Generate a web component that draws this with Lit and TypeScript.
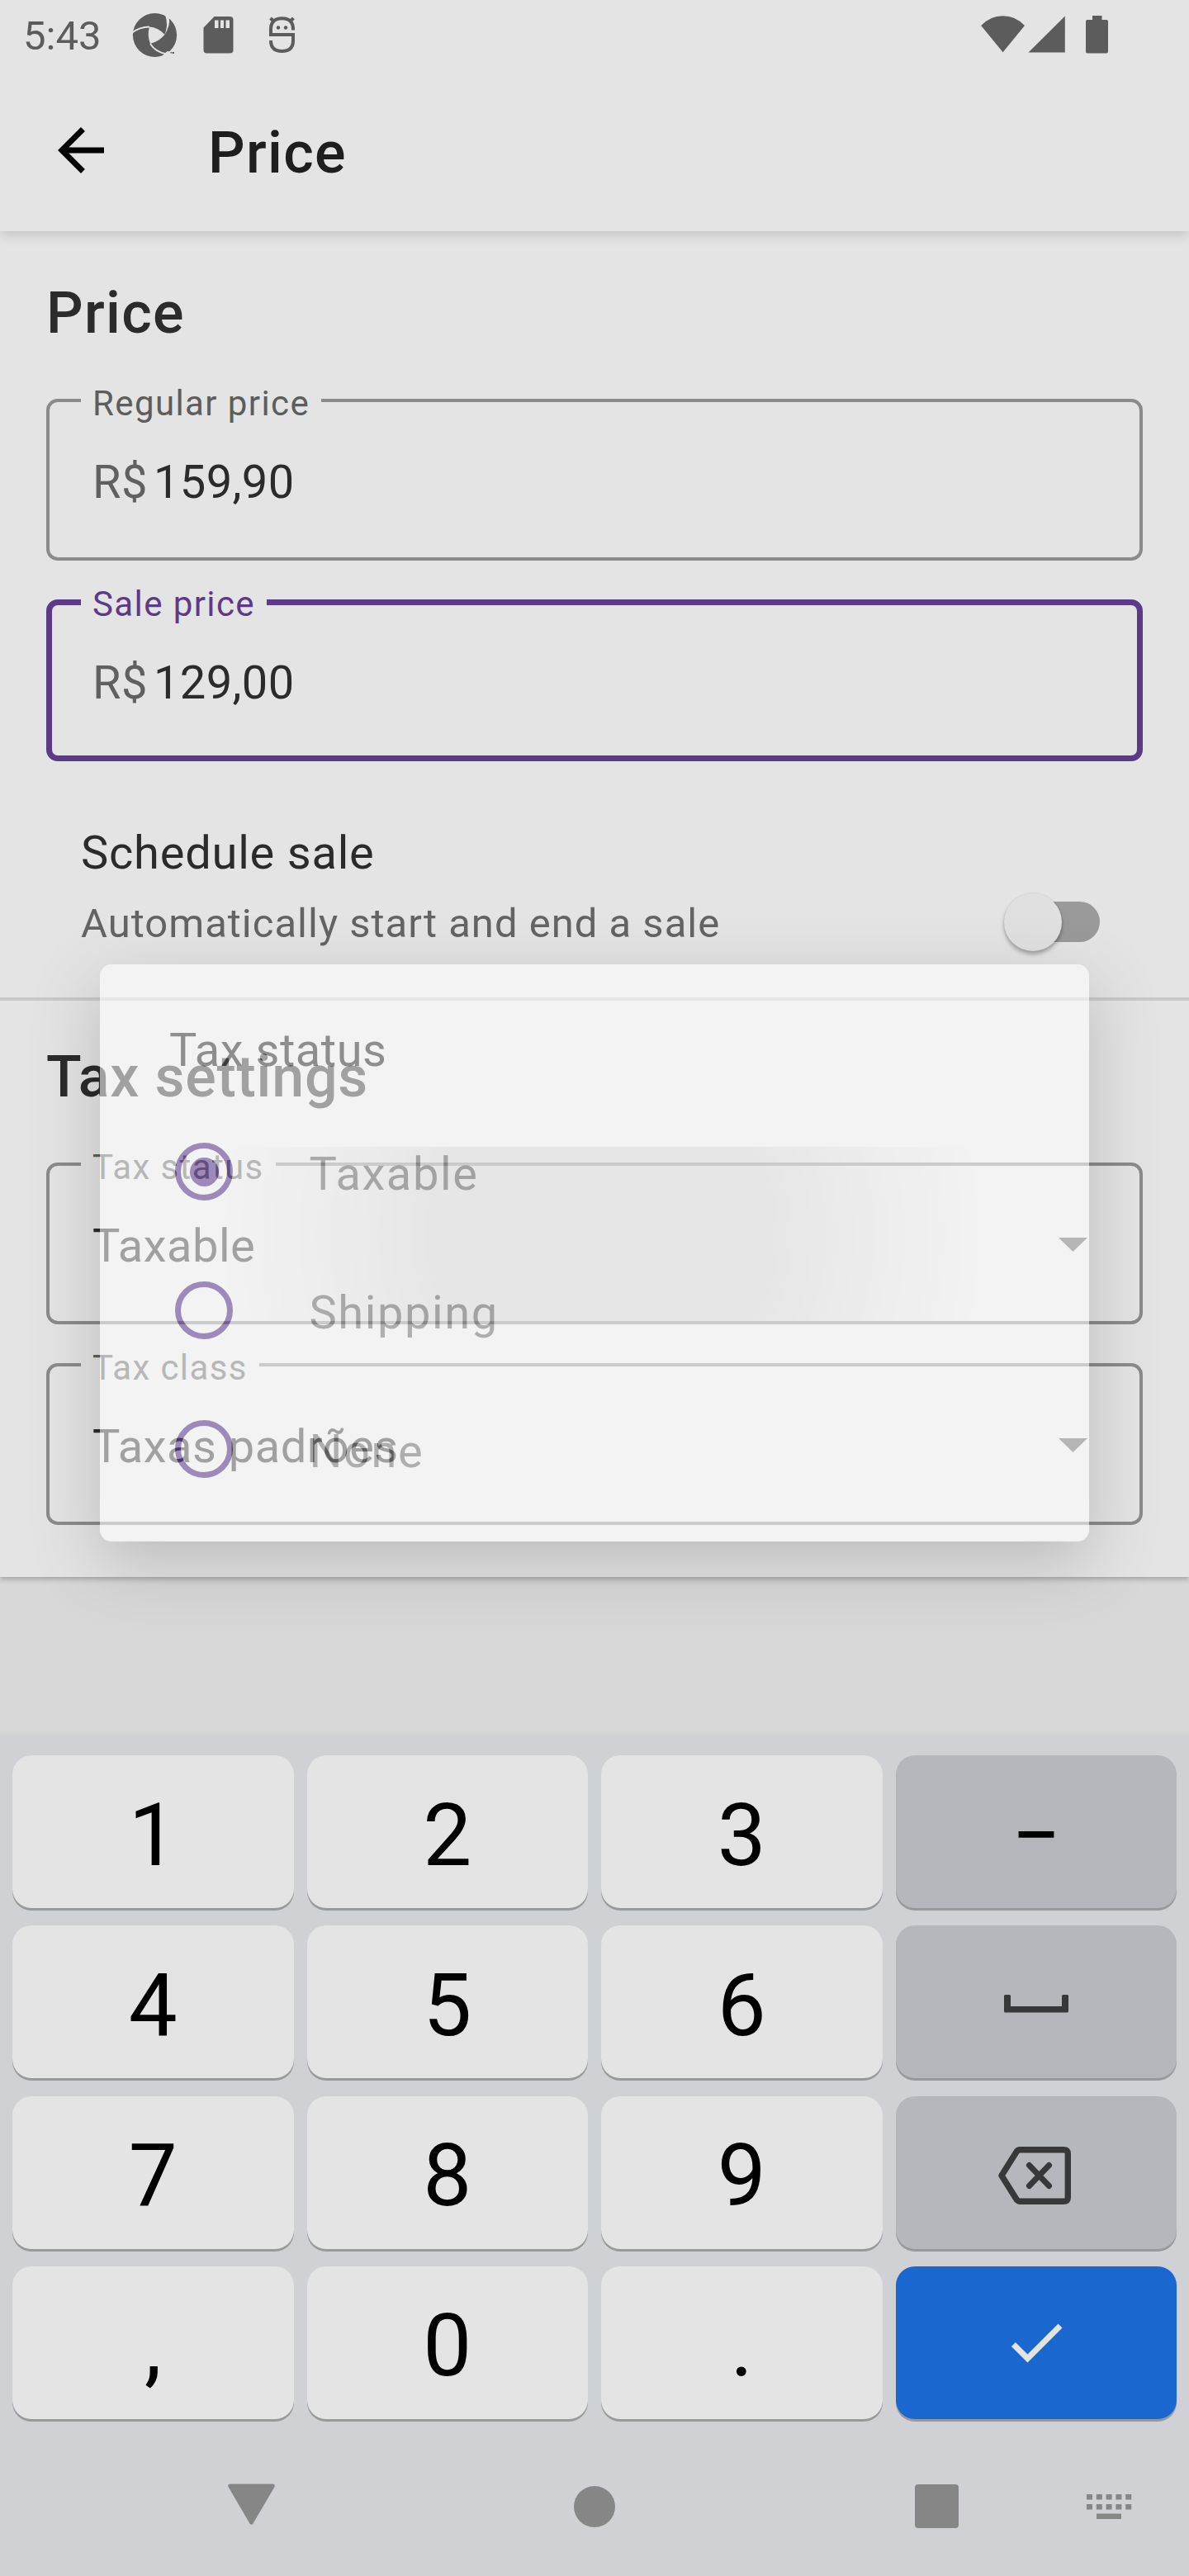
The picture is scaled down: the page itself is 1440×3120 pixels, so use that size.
import { LitElement, html, svg, css, nothing } from "lit";
import { customElement } from "lit/decorators.js";
import { classMap } from "lit/directives/class-map.js";

interface Field {
  label: string;
  value: string;
  prefix?: string;
  focused?: boolean;
  menu?: boolean;
  pressed?: boolean;
}

interface Key {
  id: string;
  kind: "digit" | "action" | "enter";
}

const PRICE_FIELDS: Field[] = [
  { label: "Regular price", prefix: "R$", value: "159,90" },
  { label: "Sale price", prefix: "R$", value: "129,00", focused: true },
];

const TAX_FIELDS: Field[] = [
  { label: "Tax status", value: "Taxable", menu: true, pressed: true },
  { label: "Tax class", value: "Taxas padrões", menu: true },
];

const OPTIONS = ["Taxable", "Shipping", "None"];

const KEYS: Key[] = [
  { id: "1", kind: "digit" },
  { id: "2", kind: "digit" },
  { id: "3", kind: "digit" },
  { id: "−", kind: "action" },
  { id: "4", kind: "digit" },
  { id: "5", kind: "digit" },
  { id: "6", kind: "digit" },
  { id: "space", kind: "action" },
  { id: "7", kind: "digit" },
  { id: "8", kind: "digit" },
  { id: "9", kind: "digit" },
  { id: "backspace", kind: "action" },
  { id: ",", kind: "digit" },
  { id: "0", kind: "digit" },
  { id: ".", kind: "digit" },
  { id: "done", kind: "enter" },
];

const spaceIcon = html`<svg class="space-icon" width="78" height="22" viewBox="0 0 78 22">
  <path fill="#38383a" d="M1.500 0h5Q8 0 8 1.500V14h62V1.500Q70 0 71.500 0h5Q78 0 78 1.500v18.500Q78 21.500 76.500 21.500h-75Q0 21.500 0 20V1.500Q0 0 1.500 0z" />
</svg>`;

const backspaceIcon = html`<svg class="backspace-icon" width="90" height="72" viewBox="0 0 90 72">
  <path fill="none" stroke="#38383a" stroke-width="7.400" stroke-linejoin="round" d="M27.500 4.700H80Q85.300 4.700 85.300 9.500V62.500Q85.300 67.300 80 67.300H27.500Q25 67.300 23.500 65.500L5 36L23.500 6.500Q25 4.700 27.500 4.700z" />
  <path fill="none" stroke="#38383a" stroke-width="7" stroke-linecap="round" d="M38.500 23.500l24 25M62.500 23.500l-24 25" />
</svg>`;

const doneIcon = html`<svg width="84" height="84" viewBox="0 0 24 24">
  <path fill="#e4e4e4" d="M9 16.170L4.830 12l-1.420 1.410L9 19 21 7l-1.410-1.410z" />
</svg>`;

const KEY_ICONS: Record<string, unknown> = {
  space: spaceIcon,
  backspace: backspaceIcon,
  done: doneIcon,
};

@customElement("app-root")
export class AppRoot extends LitElement {
  static styles = css`
    :host {
      display: block;
      font-family: Roboto, "Noto Sans", sans-serif;
      color: #2b2b2b;
    }
    svg {
      display: block;
      flex: none;
    }
    .screen {
      position: relative;
      display: flex;
      flex-direction: column;
      width: 1440px;
      height: 3120px;
      overflow: hidden;
      background: #d8d8d8;
    }
    .top {
      position: relative;
      z-index: 1;
      height: 280px;
      flex: none;
      background: #e4e4e4;
      box-shadow: 0 5px 14px rgba(0, 0, 0, 0.14);
    }
    .status {
      display: flex;
      align-items: center;
      height: 84px;
      padding: 0 98px 0 28px;
      box-sizing: border-box;
    }
    .clock {
      width: 130px;
      font-size: 49px;
      line-height: 60px;
      padding-top: 4px;
      color: #5c5c5c;
    }
    .spacer {
      flex: 1;
    }
    .bar {
      display: flex;
      align-items: center;
      height: 196px;
      padding-left: 56px;
    }
    .title {
      margin: 6px 0 0 112px;
      font-size: 70px;
      line-height: 80px;
      font-weight: 500;
      letter-spacing: 1.300px;
      color: #1e1e1e;
    }
    .card {
      display: flex;
      flex-direction: column;
      flex: none;
      background: #e4e4e4;
      box-shadow: 0 3px 6px rgba(0, 0, 0, 0.24);
    }
    .section {
      display: flex;
      flex-direction: column;
      padding: 59px 56px 0;
    }
    .section.tax {
      padding: 52px 56px 63px;
      border-top: 4px solid #c9c9c9;
    }
    .heading {
      margin: 0 0 64px;
      font-size: 70px;
      line-height: 80px;
      font-weight: 500;
      letter-spacing: 1.300px;
    }
    .tax .heading {
      letter-spacing: 0.750px;
    }
    .fields {
      display: flex;
      flex-direction: column;
      gap: 47px;
    }
    .slot {
      position: relative;
    }
    .ripple {
      position: absolute;
      left: 0;
      right: 0;
      top: -19px;
      bottom: 0;
      background: radial-gradient(
        circle 462px at 673px 107px,
        rgba(0, 0, 0, 0.125) 0,
        rgba(0, 0, 0, 0.12) 46%,
        rgba(0, 0, 0, 0.05) 75%,
        rgba(0, 0, 0, 0) 100%
      );
    }
    .field {
      position: relative;
      box-sizing: border-box;
      height: 196px;
      min-width: 0;
      margin: 0;
      padding: 0;
      border: 4px solid #8b8b8b;
      border-radius: 14px;
    }
    .label {
      height: 4px;
      margin-left: 38px;
      padding: 0 14px;
      font-size: 42px;
      line-height: 11px;
      letter-spacing: 1.400px;
      white-space: nowrap;
      color: #5d5d5d;
    }
    .row {
      display: flex;
      align-items: center;
      padding: 65px 63px 0 52px;
      font-size: 56px;
      line-height: 64px;
      letter-spacing: 0.500px;
    }
    .prefix {
      margin-right: 7px;
      color: #606060;
    }
    .prefix + .value {
      letter-spacing: 0.350px;
    }
    .field.focused {
      border: 7px solid #5d3a88;
    }
    .focused .label {
      height: 7px;
      margin-left: 35px;
      color: #5d3a88;
    }
    .focused .row {
      padding: 62px 60px 0 49px;
    }
    .arrow {
      margin: -3px 0 0 auto;
    }
    .schedule {
      display: flex;
      height: 286px;
      box-sizing: border-box;
      padding: 79px 108px 0 98px;
    }
    .schedule-text {
      flex: 1;
    }
    .schedule-title {
      font-size: 56px;
      line-height: 64px;
      letter-spacing: 0.775px;
    }
    .schedule-note {
      margin-top: 26px;
      font-size: 49px;
      line-height: 56px;
      letter-spacing: 1px;
      color: #646464;
    }
    .switch {
      display: flex;
      align-items: center;
      width: 105px;
      height: 49px;
      margin-top: 91px;
      border-radius: 25px;
      background: #9a9a9a;
    }
    .thumb {
      width: 70px;
      height: 70px;
      margin-left: -11px;
      flex: none;
      border-radius: 50%;
      background: #e0e0e0;
      box-shadow: 0 4px 5px rgba(0, 0, 0, 0.28), 0 0 3px rgba(0, 0, 0, 0.1);
    }
    .dialog {
      position: absolute;
      z-index: 2;
      left: 121px;
      top: 1168px;
      width: 1198px;
      height: 699px;
      box-sizing: border-box;
      padding: 72px 84px 0;
      border-radius: 14px;
      background: #fff;
      opacity: 0.557;
      box-shadow: 0 26px 80px rgba(0, 0, 0, 0.32);
    }
    .dialog-title {
      font-size: 56px;
      line-height: 64px;
      letter-spacing: 0.525px;
      color: #4b4b4b;
    }
    .options {
      display: flex;
      flex-direction: column;
      margin-top: 31px;
    }
    .option {
      display: flex;
      align-items: center;
      height: 168px;
      padding-left: 7px;
      font-size: 56px;
      letter-spacing: 1.600px;
      color: #858585;
    }
    .option-text {
      margin: 6px 0 0 92.500px;
      line-height: 64px;
    }
    .radio {
      display: flex;
      align-items: center;
      justify-content: center;
      box-sizing: border-box;
      width: 70px;
      height: 70px;
      border: 7px solid #674399;
      border-radius: 50%;
    }
    .dot {
      width: 35px;
      height: 35px;
      border-radius: 50%;
      background: #674399;
    }
    .keyboard {
      display: flex;
      flex-direction: column;
      flex: none;
      height: 1018px;
      margin-top: auto;
      background: #d0d1d5;
      box-shadow: 0 -2px 5px rgba(0, 0, 0, 0.04);
    }
    .keys {
      display: grid;
      grid-template-columns: repeat(4, 1fr);
      grid-auto-rows: 185px;
      gap: 21.250px 16px;
      padding: 24px 15px 0;
    }
    .key {
      display: flex;
      align-items: center;
      justify-content: center;
      border-radius: 23px;
      background: #e4e4e4;
      box-shadow: 0 3px 0 #98999b;
      font-size: 105px;
      line-height: 120px;
      color: #000;
    }
    .glyph {
      margin-top: 10px;
    }
    .space-icon {
      margin-top: 4px;
    }
    .backspace-icon {
      margin: 8px 3px 0 0;
    }
    .key.action {
      background: #b6b7bc;
    }
    .key.enter {
      background: #1967cf;
    }
    .nav {
      display: flex;
      align-items: center;
      margin-top: 76px;
      padding-left: 276px;
    }
    .nav-home {
      margin-left: 362px;
    }
    .nav-recent {
      margin-left: 363px;
    }
    .nav-ime {
      margin-left: 155px;
    }
  `;

  private renderStatus() {
    return html`<div class="status">
      <div class="clock">5:43</div>
      <svg width="210" height="84" viewBox="158 0 210 84">
        <circle cx="187.500" cy="42.500" r="26.600" fill="#5c5c5c" />
        <path fill="#e4e4e4" d="M181 32.500Q191.500 33 199.500 42Q192 50.500 182 53Q178 42.500 181 32.500z" />
        <path fill="none" stroke="#e4e4e4" stroke-width="1.800" d="M159.500 40Q169 32.500 181 32.500M182 53Q188 63 202 65.500" />
        <path fill="#e4e4e4" d="M200 18Q204.500 31 199 42.500Q207 31 204.500 20z" />
        <path fill="#e4e4e4" d="M196 68L202.500 62L214 64V70z" />
        <path fill="#5c5c5c" d="M206.500 63h2v1.500h-2zM209 63h2v2h-2z" />
        <path fill="#5c5c5c" fill-rule="evenodd" d="M259.500 20H278.500Q282.500 20 282.500 24V60.500Q282.500 64.500 278.500 64.500H250.500Q246.500 64.500 246.500 60.500V33.500zM260 24.500V34h4.500V24.500zM267 24.500V34h4V24.500zM273.500 24.500V34h4.500V24.500z" />
        <g fill="none" stroke="#5c5c5c" stroke-width="4">
          <path d="M355 36.500V35.500Q355 22.200 341.500 22.200Q328 22.200 328 35.500V42H355V49Q355 62 341.500 62Q328 62 328 49" />
          <path d="M327.500 22l4.500 4M355.500 22l-4.500 4" />
        </g>
        <circle cx="337" cy="33.500" r="2.200" fill="#5c5c5c" />
        <circle cx="346" cy="33.500" r="2.200" fill="#5c5c5c" />
      </svg>
      <div class="spacer"></div>
      <svg width="154" height="84" viewBox="1188 0 154 84" fill="#5c5c5c">
        <path d="M1188.200 31Q1199 19.200 1214.600 19.200T1241 31L1214.600 63.200z" />
        <path d="M1245.500 63.500L1289.800 19.500V63.500z" />
        <path d="M1323 19h11.500v5H1340Q1342 24 1342 26V62.500Q1342 64.500 1340 64.500H1317Q1315 64.500 1315 62.500V26Q1315 24 1317 24H1323z" />
      </svg>
    </div>`;
  }

  private renderField(f: Field) {
    return html`<div class="slot">
      ${f.pressed ? html`<div class="ripple"></div>` : nothing}
      <fieldset class=${classMap({ field: true, focused: !!f.focused })}>
        <legend class="label">${f.label}</legend>
        <div class="row">
          ${f.prefix ? html`<span class="prefix">${f.prefix}</span>` : nothing}
          <span class="value">${f.value}</span>
          ${f.menu
            ? html`<svg class="arrow" width="35" height="17" viewBox="0 0 35 17">
                <path fill="#585858" d="M0 0h35L17.500 17z" />
              </svg>`
            : nothing}
        </div>
      </fieldset>
    </div>`;
  }

  private renderDialog() {
    return html`<div class="dialog">
      <div class="dialog-title">Tax status</div>
      <div class="options">
        ${OPTIONS.map(
          (label, i) => html`<div class="option">
            <div class="radio">${i === 0 ? html`<div class="dot"></div>` : nothing}</div>
            <div class="option-text">${label}</div>
          </div>`
        )}
      </div>
    </div>`;
  }

  private renderNav() {
    const dots = [0, 1, 2, 3, 4].map(
      (i) => svg`<rect x=${i * 11.8} y="0" width="7" height="6.500" /><rect x=${i * 11.8} y="12" width="7" height="6.500" />`
    );
    return html`<div class="nav">
      <svg width="57" height="60" viewBox="0 0 57 60">
        <path fill="#868686" d="M3 2.500H54Q57.500 2.500 56.500 6L30.500 50.500Q28.500 53 26.500 50.500L.5 6Q-.5 2.500 3 2.500z" />
      </svg>
      <svg class="nav-home" width="50" height="50" viewBox="0 0 50 50">
        <circle cx="25" cy="25" r="25" fill="#868686" />
      </svg>
      <svg class="nav-recent" width="53" height="53" viewBox="0 0 53 53">
        <rect width="53" height="53" rx="4" fill="#868686" />
      </svg>
      <svg class="nav-ime" width="55" height="30" viewBox="0 0 55 30" fill="#868686">
        ${dots}
        <rect x="12" y="23.500" width="30" height="6.500" />
      </svg>
    </div>`;
  }

  render() {
    return html`<div class="screen">
      <div class="top">
        ${this.renderStatus()}
        <div class="bar">
          <svg width="84" height="84" viewBox="0 0 24 24">
            <path d="M20 11H7.830l5.590-5.590L12 4l-8 8 8 8 1.410-1.410L7.830 13H20v-2z" />
          </svg>
          <div class="title">Price</div>
        </div>
      </div>
      <div class="card">
        <div class="section">
          <h2 class="heading">Price</h2>
          <div class="fields">${PRICE_FIELDS.map((f) => this.renderField(f))}</div>
        </div>
        <div class="schedule">
          <div class="schedule-text">
            <div class="schedule-title">Schedule sale</div>
            <div class="schedule-note">Automatically start and end a sale</div>
          </div>
          <div class="switch"><div class="thumb"></div></div>
        </div>
        <div class="section tax">
          <h2 class="heading">Tax settings</h2>
          <div class="fields">${TAX_FIELDS.map((f) => this.renderField(f))}</div>
        </div>
      </div>
      <div class="keyboard">
        <div class="keys">
          ${KEYS.map(
            (k) => html`<div class=${classMap({ key: true, action: k.kind === "action", enter: k.kind === "enter" })}>
              ${KEY_ICONS[k.id] ?? html`<span class="glyph">${k.id}</span>`}
            </div>`
          )}
        </div>
        ${this.renderNav()}
      </div>
      ${this.renderDialog()}
    </div>`;
  }
}
